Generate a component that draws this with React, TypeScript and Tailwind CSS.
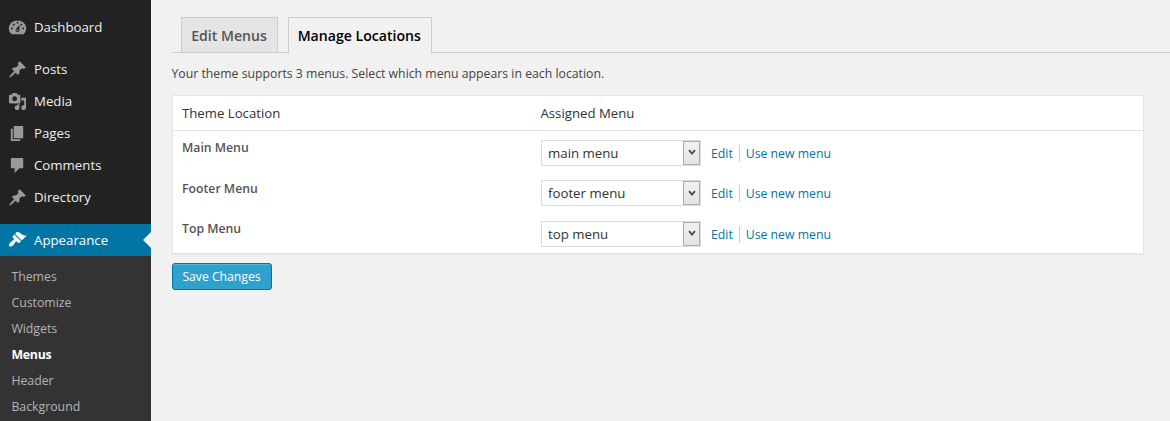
import React from "react";

const pin =
  "M10.44 3.02l1.82-1.82 6.36 6.35-1.83 1.82c-1.05-.68-2.48-.57-3.41.36l-.75.75c-.92.93-1.04 2.35-.35 3.41l-1.83 1.82-2.41-2.41-2.8 2.79c-.42.42-3.38 2.71-3.8 2.29s1.86-3.39 2.28-3.81l2.79-2.79L4.1 9.36l1.83-1.82c1.05.69 2.48.57 3.4-.36l.75-.75c.93-.92 1.05-2.35.36-3.41z";
const gauge =
  "M3.76 17h12.48A7.998 7.998 0 0 0 10 3a8 8 0 0 0-6.24 14zM10 4c.55 0 1 .45 1 1s-.45 1-1 1-1-.45-1-1 .45-1 1-1zM6 6c.55 0 1 .45 1 1s-.45 1-1 1-1-.45-1-1 .45-1 1-1zm8 0c.55 0 1 .45 1 1s-.45 1-1 1-1-.45-1-1 .45-1 1-1zm-5.37 5.55L12 7v6c0 1.1-.9 2-2 2s-2-.9-2-2c0-.57.24-1.08.63-1.45zM4 10c.55 0 1 .45 1 1s-.45 1-1 1-1-.45-1-1 .45-1 1-1zm12 0c.55 0 1 .45 1 1s-.45 1-1 1-1-.45-1-1 .45-1 1-1zm-5 3c0-.55-.45-1-1-1s-1 .45-1 1 .45 1 1 1 1-.45 1-1z";
const media =
  "M13 11V4c0-.55-.45-1-1-1h-1.67L9 1H5L3.67 3H2c-.55 0-1 .45-1 1v7c0 .55.45 1 1 1h10c.55 0 1-.45 1-1zM7 4.5c1.38 0 2.5 1.12 2.5 2.5S8.38 9.5 7 9.5 4.5 8.38 4.5 7 5.62 4.5 7 4.5zM14 6h5v10.5c0 1.38-1.12 2.5-2.5 2.5S14 17.88 14 16.5s1.12-2.5 2.5-2.5c.17 0 .34.02.5.05V9h-3V6zm-4 8.05V13h2v3.5c0 1.38-1.12 2.5-2.5 2.5S7 17.88 7 16.5 8.12 14 9.5 14c.17 0 .34.02.5.05z";
const pages = "M6 15V2h10v13H6zm-1 1h8v2H3V5h2v11z";
const comments =
  "M4 2h11c.55 0 1 .45 1 1v9c0 .55-.45 1-1 1h-3l-5 5v-5H4c-.55 0-1-.45-1-1V3c0-.55.45-1 1-1z";
const brush =
  "M14.48 11.06L7.41 3.99l1.5-1.5c.5-.56 2.3-.47 3.51.32 1.21.8 1.43 1.28 2.91 2.1 1.18.64 2.45 1.26 4.45.85zm-.71.71L6.7 4.7 4.93 6.47c-.39.39-.39 1.02 0 1.41l1.06 1.06c.39.39.39 1.03 0 1.42-.6.6-1.43 1.11-2.21 1.69-.35.26-.7.53-1.01.84C1.43 14.23.4 16.08 1.4 17.07c.99 1 2.84-.03 4.18-1.36.31-.31.58-.66.85-1.02.57-.78 1.08-1.61 1.69-2.21.39-.39 1.02-.39 1.41 0l1.06 1.06c.39.39 1.02.39 1.41 0z";

function Icon({ d }: { d: string }) {
  return (
    <svg viewBox="0 0 20 20" className="mb-px h-[19px] w-[19px] shrink-0" fill="currentColor" fillRule="evenodd">
      <path d={d} />
    </svg>
  );
}

function NavItem({ d, label }: { d: string; label: string }) {
  return (
    <a className="flex h-8 items-center gap-[7.5px] pl-[7.5px] text-[#999]">
      <Icon d={d} />
      <span className="text-[13.25px] text-[#eee]">{label}</span>
    </a>
  );
}

const items = [
  { d: pin, label: "Posts" },
  { d: media, label: "Media" },
  { d: pages, label: "Pages" },
  { d: comments, label: "Comments" },
  { d: pin, label: "Directory" },
];

const submenu = ["Themes", "Customize", "Widgets", "Menus", "Header", "Background"];

const locations = [
  { name: "Main Menu", menu: "main menu" },
  { name: "Footer Menu", menu: "footer menu" },
  { name: "Top Menu", menu: "top menu" },
];

function Sidebar() {
  return (
    <aside className="flex w-[151px] shrink-0 flex-col bg-[#222] pt-[12px]">
      <NavItem d={gauge} label="Dashboard" />
      <nav className="mt-[10px] flex flex-col">
        {items.map((i) => (
          <NavItem key={i.label} d={i.d} label={i.label} />
        ))}
      </nav>
      <a className="mt-[10px] flex h-[32px] shrink-0 items-center gap-[7.5px] bg-[#0074a2] pl-[7.5px] text-white">
        <Icon d={brush} />
        <span className="pt-[2px] text-[13.25px]">Appearance</span>
        <svg viewBox="0 0 8 16" className="ml-auto h-4 w-2" fill="#f1f1f1">
          <path d="M8 0v16L0 8z" />
        </svg>
      </a>
      <div className="flex flex-1 flex-col bg-[#333] pt-[8px] pl-[11.4px] text-[12.3px] text-[#b4b4b4]">
        {submenu.map((s) => (
          <a
            key={s}
            className={s === "Menus" ? "flex h-[26.1px] items-center font-bold tracking-[-0.2px] text-white" : "flex h-[26.1px] items-center"}
          >
            {s}
          </a>
        ))}
      </div>
    </aside>
  );
}

function Select({ value }: { value: string }) {
  return (
    <div className="mt-[0.6px] flex h-[26px] w-[160px] border border-[#ddd] bg-white">
      <span className="flex-1 pl-[6px] text-[13.25px] leading-[24px] text-[#333]">{value}</span>
      <span className="flex w-[17px] items-center justify-center border border-[#acacac] bg-linear-to-b from-[#f2f2f2] to-[#e3e3e3]">
        <svg viewBox="0 0 8 7" className="h-[7px] w-2" fill="none" stroke="#4a4a4a" strokeWidth="1.8">
          <path d="M1 1.2L4 4.7L7 1.2" />
        </svg>
      </span>
    </div>
  );
}

export default function App() {
  return (
    <div className="flex h-[421px] w-[1170px] overflow-hidden bg-[#f1f1f1] font-['Open_Sans',sans-serif] text-[#444]">
      <Sidebar />
      <main className="flex flex-1 flex-col pt-[17px] pl-[20.5px]">
        <div className="flex h-9 items-end border-b border-[#ccc] pl-[9.5px] text-[14.1px] font-semibold">
          <a className="flex h-[35px] w-[97px] items-center justify-center border border-b-0 border-[#ccc] bg-[#e4e4e4] pt-px pr-px text-[#555]">
            Edit Menus
          </a>
          <a className="-mb-px ml-[10px] flex h-9 w-[144px] items-center justify-center border border-b-0 border-[#ccc] bg-[#f1f1f1] pr-[1.5px] text-black">
            Manage Locations
          </a>
        </div>
        <p className="mt-[12px] h-[18px] text-[12.27px] leading-[18px]">
          Your theme supports 3 menus. Select which menu appears in each location.
        </p>
        <section className="mt-[12px] ml-[0.5px] h-[159px] w-[972px] border border-[#e5e5e5] bg-white shadow-[0_1px_1px_rgba(0,0,0,0.04)]">
          <div className="flex h-[35px] items-center border-b border-[#e1e1e1] pt-px text-[13.2px] text-[#333]">
            <span className="w-[358px] pl-[9px]">Theme Location</span>
            <span className="pl-[9.5px]">Assigned Menu</span>
          </div>
          <div className="flex flex-col pt-[8px]">
            {locations.map((l) => (
              <div key={l.name} className="flex h-[40.5px] items-start text-[12.25px]">
                <span className="w-[368px] pl-[9px] leading-[18px] font-semibold text-[#555]">{l.name}</span>
                <Select value={l.menu} />
                <div className="mt-[0.6px] flex h-[27px] items-center pl-[10px] text-[#0074a2]">
                  <a className="leading-[19px]">Edit</a>
                  <span className="mr-[5.5px] ml-[6.5px] h-[17px] w-px bg-[#ccc]" />
                  <a className="leading-[19px]">Use new menu</a>
                </div>
              </div>
            ))}
          </div>
        </section>
        <button className="mt-[9px] h-[27px] w-[100px] rounded-[3px] border border-[#0074a2] bg-[#2ea2cc] pt-px text-[12.2px] text-white shadow-[inset_0_1px_0_rgba(120,200,230,0.5)]">
          Save Changes
        </button>
      </main>
    </div>
  );
}
